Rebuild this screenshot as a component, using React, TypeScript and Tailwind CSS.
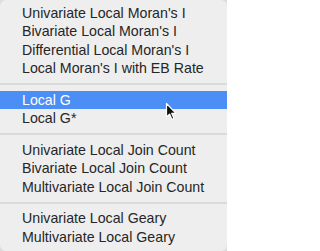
const groups: string[][] = [
  [
    "Univariate Local Moran's I",
    "Bivariate Local Moran's I",
    "Differential Local Moran's I",
    "Local Moran's I with EB Rate",
  ],
  ['Local G', 'Local G*'],
  ['Univariate Local Join Count', 'Bivariate Local Join Count', 'Multivariate Local Join Count'],
  ['Univariate Local Geary', 'Multivariate Local Geary'],
];

const active = 'Local G';

function Pointer() {
  return (
    <svg
      className="absolute left-[165px] top-[102px]"
      width="13"
      height="19"
      viewBox="0 0 13 19"
    >
      <path
        d="M1.5 1.5 L1.5 15 L4.6 12.1 L7 17.4 L9 16.5 L6.7 11.3 L11 11.3 Z"
        fill="#111"
        stroke="#fff"
        strokeWidth="1.2"
        strokeLinejoin="round"
      />
    </svg>
  );
}

export default function App() {
  return (
    <div className="w-[227px] h-[251px] bg-[#dcdcdc] overflow-hidden">
      <div
        className="relative w-full h-full bg-[#eeeeee] rounded-[6px] pt-[3.75px] text-[#262626] text-[14.2px] leading-none"
        style={{ fontFamily: '"Liberation Sans", Arial, sans-serif' }}
      >
        {groups.map((items, gi) => (
          <div key={gi}>
            {gi > 0 && (
              <div className="h-[13px] flex items-center">
                <div className="w-full h-[2px] bg-[#dadada]" />
              </div>
            )}
            {items.map((label) => (
              <div
                key={label}
                className={
                  label === active
                    ? 'h-[18.5px] flex items-center pl-[22px] bg-[#4b8ef5] text-white'
                    : 'h-[18.5px] flex items-center pl-[22px]'
                }
              >
                {label}
              </div>
            ))}
          </div>
        ))}
        <Pointer />
      </div>
    </div>
  );
}
